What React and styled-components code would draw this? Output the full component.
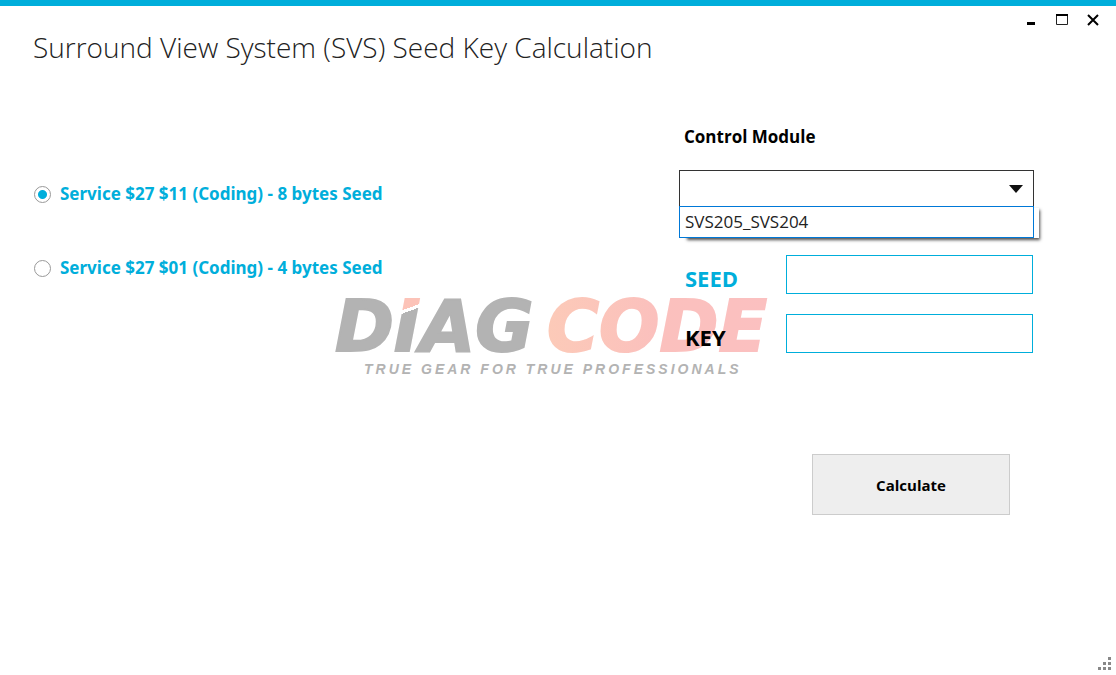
import React, { useState } from 'react';
import styled, { createGlobalStyle } from 'styled-components';

const ACCENT = '#00aedb';

const GlobalStyle = createGlobalStyle`
    *, *::before, *::after {
        box-sizing: border-box;
    }

    body {
        margin: 0;
        background: #fff;
        color: #000;
        font-family: 'Open Sans', 'Noto Sans', sans-serif;
        font-size: 17px;
        line-height: 24px;
    }
`;

const Window = styled.div`
    position: relative;
    display: flex;
    flex-direction: column;
    min-height: 100vh;
    border-top: 6px solid ${ACCENT};
`;

const Header = styled.header`
    display: flex;
    justify-content: space-between;
    align-items: flex-start;
    padding: 0 8px 0 33px;
`;

const Title = styled.h1`
    margin: 0;
    padding-top: 21px;
    color: #222;
    font-size: 28px;
    font-weight: 300;
    line-height: 40px;
`;

const WindowControls = styled.div`
    display: flex;
`;

const WindowButton = styled.button`
    display: flex;
    justify-content: center;
    align-items: center;
    width: 31px;
    height: 28px;
    padding: 0;
    border: 0;
    background: transparent;
`;

const Watermark = styled.div`
    position: absolute;
    inset: -6px 0 0;
    display: flex;
    justify-content: center;
    align-items: center;
    pointer-events: none;
`;

const LogoImage = styled.svg`
    overflow: visible;
`;

const Content = styled.form`
    position: relative;
    display: grid;
    grid-template-columns: minmax(0, 645fr) minmax(0, 355fr);
    padding: 58px 82px 40px 34px;
`;

const Services = styled.div`
    display: flex;
    flex-direction: column;
    align-items: flex-start;
    gap: 50px;
    padding-top: 57px;
`;

const ServiceLabel = styled.label`
    display: flex;
    align-items: center;
    gap: 9px;
    color: ${ACCENT};
    font-family: 'Noto Sans', sans-serif;
    font-weight: 700;
`;

const Radio = styled.input`
    appearance: none;
    width: 17px;
    height: 17px;
    margin: 0;
    border: 1px solid #999;
    border-radius: 50%;
    background: #fff;

    &:checked {
        background: radial-gradient(circle, ${ACCENT} 4px, #fff 5px);
    }
`;

const Panel = styled.div`
    display: flex;
    flex-direction: column;
`;

const ModuleLabel = styled.label`
    margin-bottom: 21px;
    padding-left: 5px;
    font-weight: 700;
`;

const Combo = styled.div`
    position: relative;
    margin-bottom: 48px;
`;

const Select = styled.select`
    display: block;
    appearance: none;
    width: 100%;
    height: 37px;
    padding: 0 32px 0 6px;
    border: 1px solid #333;
    border-radius: 0;
    background: #fff;
    color: #222;
    font: inherit;
`;

const Arrow = styled.svg`
    position: absolute;
    top: 15px;
    right: 11px;
    pointer-events: none;
`;

const Menu = styled.ul`
    position: absolute;
    top: 36px;
    left: 0;
    right: 0;
    z-index: 1;
    margin: 0;
    padding: 0;
    border: 1px solid #0078d7;
    background: #fff;
    box-shadow: 6px 1px 0 -1px #fff, 7px 3px 3px -1px rgba(0, 0, 0, 0.7);
    list-style: none;
`;

const MenuItem = styled.li`
    padding: 3px 5px;
    color: #222;
`;

const Fields = styled.div`
    display: flex;
    flex-direction: column;
    gap: 20px;
    margin-bottom: 101px;
`;

const Field = styled.div`
    display: grid;
    grid-template-columns: 107px minmax(0, 1fr);
    padding-right: 1px;
`;

const FieldLabel = styled.label`
    padding: 8px 0 0 6px;
    color: ${({ $accent }) => ($accent ? ACCENT : '#000')};
    font-size: 22px;
    font-weight: 700;
    line-height: 30px;
`;

const TextBox = styled.input`
    width: 100%;
    height: 39px;
    padding: 0 8px;
    border: 1px solid ${ACCENT};
    border-radius: 0;
    background: #fff;
    font: inherit;
`;

const CalculateButton = styled.button`
    align-self: flex-end;
    width: 198px;
    height: 61px;
    margin-right: 24px;
    border: 1px solid #ccc;
    background: #eee;
    color: #000;
    font: inherit;
    font-size: 15px;
    font-weight: 700;
`;

const Footer = styled.footer`
    display: flex;
    justify-content: flex-end;
    margin-top: auto;
    padding: 0 4px 4px 0;
`;

const Logo = () => (
    <LogoImage width="448" height="78" viewBox="0 0 448 78" aria-label="DIAGCODE">
        <defs>
            <linearGradient id="code" x1="0" y1="0" x2="1" y2="0">
                <stop offset="0" stopColor="#fccab8" />
                <stop offset="0.5" stopColor="#fbc0bd" />
                <stop offset="1" stopColor="#fbc0c0" />
            </linearGradient>
            {/* coloured tip of the I, split off by a white slash */}
            <linearGradient id="tip" gradientUnits="userSpaceOnUse" x1="68" y1="0" x2="86" y2="50">
                <stop offset="0.2" stopColor="#fcc3b8" />
                <stop offset="0.2" stopColor="#fff" />
                <stop offset="0.26" stopColor="#fff" />
                <stop offset="0.26" stopColor="#b3b3b3" />
            </linearGradient>
        </defs>
        <g fontFamily="'DejaVu Sans', sans-serif" fontSize="71" fontWeight="700" fontStyle="italic" strokeWidth="2">
            <text x="1" y="52" fill="#b3b3b3" stroke="#b3b3b3">
                D<tspan fill="url(#tip)" stroke="url(#tip)">I</tspan>AG
            </text>
            <text x="213" y="52" fill="url(#code)" stroke="url(#code)">CODE</text>
        </g>
        <text
            x="30"
            y="75"
            fill="#b3b3b3"
            fontFamily="'Liberation Sans', sans-serif"
            fontSize="14"
            fontWeight="700"
            fontStyle="italic"
            letterSpacing="3"
        >
            TRUE GEAR FOR TRUE PROFESSIONALS
        </text>
    </LogoImage>
);

const services = [
    { value: 'coding8', text: 'Service $27 $11 (Coding) - 8 bytes Seed' },
    { value: 'coding4', text: 'Service $27 $01 (Coding) - 4 bytes Seed' }
];

const modules = ['SVS205_SVS204'];

const App = () => {
    const [service, setService] = useState('coding8');
    const [module, setModule] = useState('');
    const [open, setOpen] = useState(true);
    const [seed, setSeed] = useState('');

    const pick = (name) => {
        setModule(name);
        setOpen(false);
    };

    return (
        <>
            <GlobalStyle />
            <Window>
                <Watermark>
                    <Logo />
                </Watermark>
                <Header>
                    <Title>Surround View System (SVS) Seed Key Calculation</Title>
                    <WindowControls>
                        <WindowButton type="button" aria-label="Minimize">
                            <svg width="14" height="14"><path d="M3 10.5h8" stroke="#000" strokeWidth="3" /></svg>
                        </WindowButton>
                        <WindowButton type="button" aria-label="Maximize">
                            <svg width="14" height="14">
                                <path d="M1.5 2v9.5h11V2" fill="none" stroke="#222" />
                                <path d="M1 2h12" stroke="#000" strokeWidth="2" />
                            </svg>
                        </WindowButton>
                        <WindowButton type="button" aria-label="Close">
                            <svg width="14" height="14"><path d="M2 2l10 10M12 2L2 12" stroke="#000" strokeWidth="2" /></svg>
                        </WindowButton>
                    </WindowControls>
                </Header>

                <Content onSubmit={(e) => e.preventDefault()}>
                    <Services>
                        {services.map(({ value, text }) => (
                            <ServiceLabel key={value} htmlFor={value}>
                                <Radio
                                    type="radio"
                                    id={value}
                                    name="service"
                                    checked={service === value}
                                    onChange={() => setService(value)}
                                />
                                {text}
                            </ServiceLabel>
                        ))}
                    </Services>

                    <Panel>
                        <ModuleLabel htmlFor="module">Control Module</ModuleLabel>
                        <Combo>
                            <Select id="module" value={module} onChange={(e) => pick(e.target.value)}>
                                <option value="" />
                                {modules.map((name) => <option key={name} value={name}>{name}</option>)}
                            </Select>
                            <Arrow width="14" height="8" viewBox="0 0 14 8">
                                <path d="M0 0h14L7 8z" fill="#111" />
                            </Arrow>
                            {open && (
                                <Menu role="listbox" aria-label="Control Module">
                                    {modules.map((name) => (
                                        <MenuItem key={name} role="option" aria-selected={module === name} onClick={() => pick(name)}>
                                            {name}
                                        </MenuItem>
                                    ))}
                                </Menu>
                            )}
                        </Combo>
                        <Fields>
                            <Field>
                                <FieldLabel htmlFor="seed" $accent>SEED</FieldLabel>
                                <TextBox id="seed" type="text" value={seed} onChange={(e) => setSeed(e.target.value)} />
                            </Field>
                            <Field>
                                <FieldLabel htmlFor="key">KEY</FieldLabel>
                                <TextBox id="key" type="text" readOnly />
                            </Field>
                        </Fields>
                        <CalculateButton type="submit">Calculate</CalculateButton>
                    </Panel>
                </Content>

                <Footer>
                    <svg width="14" height="14" fill="#888">
                        <path d="M10 0h3v3h-3zM5 5h3v3H5zM10 5h3v3h-3zM0 10h3v3H0zM5 10h3v3H5zM10 10h3v3h-3z" />
                    </svg>
                </Footer>
            </Window>
        </>
    );
};

export default App;
